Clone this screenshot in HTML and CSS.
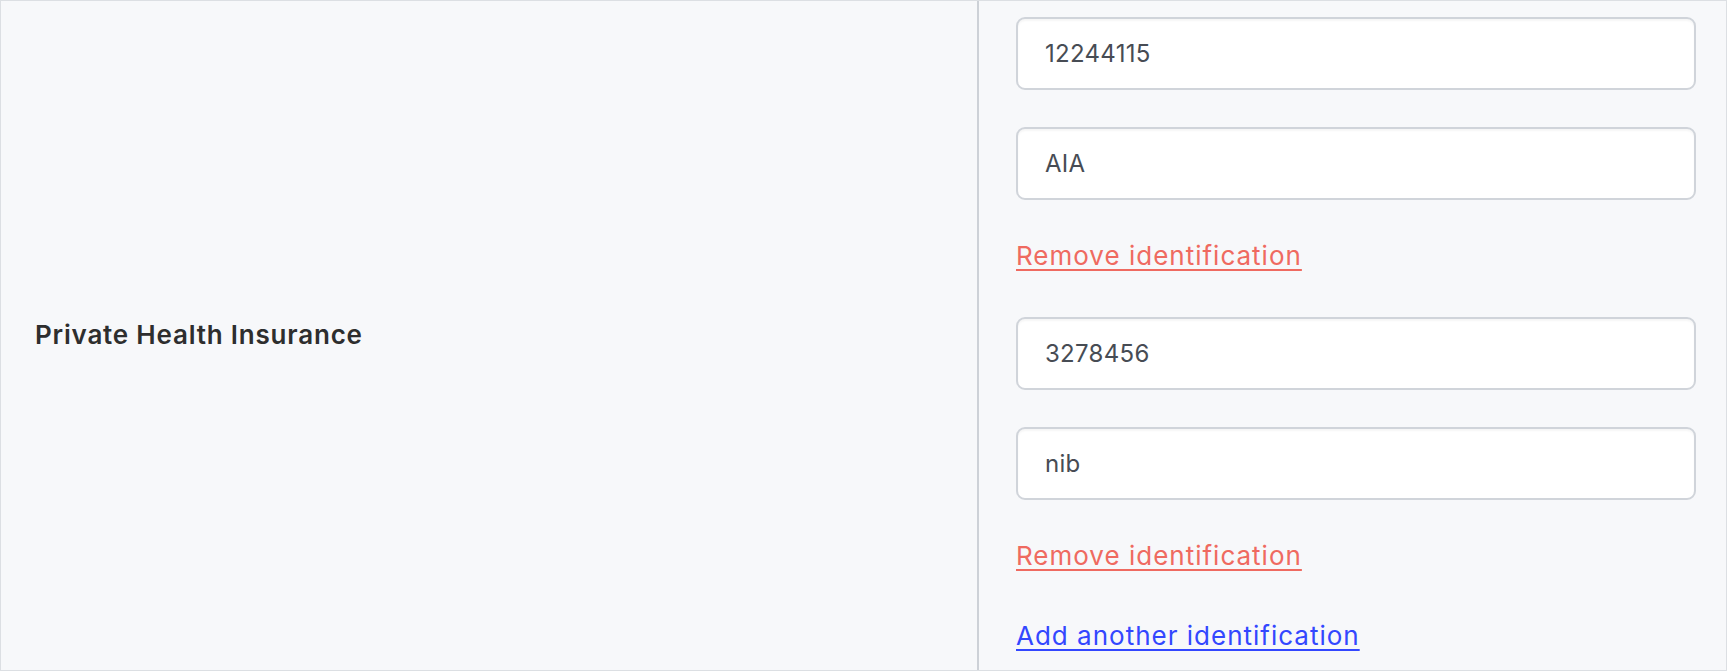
FILE: index.html
```html
<!DOCTYPE html>
<html lang="en">
<head>
<meta charset="utf-8">
<title>Private Health Insurance</title>
<link rel="stylesheet" href="styles.css">
</head>
<body>
<div class="row">
  <div class="label-col">
    <span class="label">Private Health Insurance</span>
  </div>
  <div class="field-col">
    <div class="entry">
      <input class="text-input" type="text" value="12244115">
      <input class="text-input" type="text" value="AIA">
      <a class="link remove" href="#">Remove identification</a>
    </div>
    <div class="entry">
      <input class="text-input" type="text" value="3278456">
      <input class="text-input" type="text" value="nib">
      <a class="link remove" href="#">Remove identification</a>
    </div>
    <a class="link add" href="#">Add another identification</a>
  </div>
</div>
</body>
</html>
```

FILE: styles.css
```css
* { box-sizing: border-box; }
html, body { margin: 0; padding: 0; background: #f7f8fa; }
body { font-family: Inter, "Noto Sans", "Liberation Sans", sans-serif; }

.row {
  display: flex;
  width: 1727px;
  height: 671px;
  border: 1px solid #dcdfe3;
  background: #f7f8fa;
}

.label-col {
  width: 976px;
  flex: none;
  display: flex;
  align-items: center;
  padding-left: 34px;
  padding-bottom: 2px;
}

.label {
  font-size: 26px;
  font-weight: 600;
  color: #2e2e2e;
  letter-spacing: 0.8px;
}

.field-col {
  flex: 1;
  border-left: 2px solid #cdd1d7;
  padding: 16px 30px 0 37px;
  display: flex;
  flex-direction: column;
}

.entry {
  display: flex;
  flex-direction: column;
}

.text-input {
  display: block;
  width: 100%;
  height: 73px;
  margin: 0 0 37px 0;
  padding: 0 27px;
  border: 2px solid #d0d4da;
  border-radius: 9px;
  background: #ffffff;
  box-shadow: inset 0 2px 2px rgba(0, 0, 0, 0.04);
  font-family: inherit;
  font-size: 24px;
  letter-spacing: 0.3px;
  color: #474c54;
  outline: none;
}

.link {
  display: block;
  align-self: flex-start;
  font-size: 26px;
  line-height: 34px;
  letter-spacing: 1px;
  text-decoration: underline;
  text-underline-offset: 4px;
  text-decoration-thickness: 2px;
}

.remove {
  color: #ef6a60;
  margin: 2px 0 44px 0;
}

.add {
  color: #3347ff;
  margin-top: 2px;
}
```
